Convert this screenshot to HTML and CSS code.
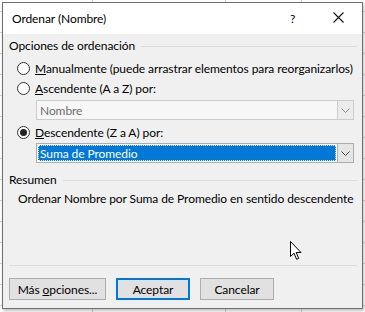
FILE: index.html
```html
<!DOCTYPE html>
<html lang="es">
<head>
  <meta charset="UTF-8">
  <title>Ordenar (Nombre)</title>
  <link rel="stylesheet" href="styles.css">
</head>
<body>
  <div class="sheet">
    <div class="dialog">
      <div class="titlebar">
        <span class="title">Ordenar (Nombre)</span>
        <span class="help">?</span>
        <svg class="close" width="11" height="11" viewBox="0 0 11 11"><path d="M0.5 0.5 L10.5 10.5 M10.5 0.5 L0.5 10.5" stroke="#111" stroke-width="1.1" fill="none"/></svg>
      </div>

      <div class="body">
        <div class="group-label"><span>Opciones de ordenación</span><i></i></div>

        <label class="radio-row first">
          <span class="radio"></span>
          <span><u>M</u>anualmente (puede arrastrar elementos para reorganizarlos)</span>
        </label>
        <label class="radio-row">
          <span class="radio"></span>
          <span><u>A</u>scendente (A a Z) por:</span>
        </label>
        <div class="combo disabled">
          <span class="combo-text">Nombre</span>
          <span class="combo-btn"><svg width="9" height="5" viewBox="0 0 9 5"><path d="M0.5 0.5 L4.5 4.5 L8.5 0.5" stroke="#8a8a8a" fill="none"/></svg></span>
        </div>

        <label class="radio-row third">
          <span class="radio checked"></span>
          <span><u>D</u>escendente (Z a A) por:</span>
        </label>
        <div class="combo active">
          <span class="combo-text"><span class="sel">Suma de Promedio</span></span>
          <span class="combo-btn"><svg width="9" height="5" viewBox="0 0 9 5"><path d="M0.5 0.5 L4.5 4.5 L8.5 0.5" stroke="#444" fill="none"/></svg></span>
        </div>

        <div class="group-label summary-label"><span>Resumen</span><i></i></div>
        <p class="summary">Ordenar Nombre por Suma de Promedio en sentido descendente</p>

        <div class="separator"></div>

        <div class="buttons">
          <button class="btn wide">Más <u>o</u>pciones...</button>
          <button class="btn default">Aceptar</button>
          <button class="btn">Cancelar</button>
        </div>
      </div>

      <svg class="cursor" width="13" height="20" viewBox="0 0 13 20"><path d="M0.5 0.5 L0.5 15.5 L4 12.2 L6.6 18.3 L8.7 17.4 L6.2 11.5 L11 11.5 Z" fill="#fff" stroke="#000" stroke-width="1" stroke-linejoin="miter"/></svg>
    </div>
  </div>
</body>
</html>
```

FILE: styles.css
```css
* {
  box-sizing: border-box;
  margin: 0;
  padding: 0;
}

body {
  width: 365px;
  height: 312px;
  overflow: hidden;
  font-family: Lato, sans-serif;
  font-size: 12px;
  letter-spacing: -0.08px;
  color: #000;
  background: #fff;
}

/* spreadsheet grid behind the dialog */
.sheet {
  height: 312px;
  padding: 2px 0 0 2px;
  background-color: #fff;
  background-image:
    linear-gradient(90deg, transparent 92px, #d4d4d4 92px, #d4d4d4 93px, transparent 93px),
    linear-gradient(90deg, transparent 225px, #d4d4d4 225px, #d4d4d4 226px, transparent 226px),
    linear-gradient(90deg, transparent 301px, #d4d4d4 301px, #d4d4d4 302px, transparent 302px),
    repeating-linear-gradient(180deg, transparent 0, transparent 11px, #d4d4d4 11px, #d4d4d4 12px, transparent 12px, transparent 21px);
}

.dialog {
  position: relative;
  width: 361px;
  height: 307px;
  border: 1px solid #6f6f6f;
  background: #f0f0f0;
  box-shadow: 1px 2px 3px rgba(0, 0, 0, 0.25);
}

.titlebar {
  height: 31px;
  background: #fff;
  display: flex;
  align-items: center;
  padding: 0 0 0 9px;
}

.title {
  flex: 1;
  margin-top: -1px;
}

.help {
  width: 14px;
  margin-right: 29px;
  margin-top: -1px;
}

.close {
  margin-right: 18px;
  margin-top: -2px;
}

.body {
  padding: 4px 5px 0 6px;
}

.group-label {
  display: flex;
  align-items: center;
  height: 16px;
  line-height: 16px;
}

.group-label i {
  flex: 1;
  height: 1px;
  background: #dcdcdc;
  margin-left: 6px;
}

.radio-row {
  display: flex;
  align-items: center;
  height: 20px;
  padding-left: 8px;
  white-space: nowrap;
}

.radio-row.first {
  margin-top: 4px;
}

.radio-row.third {
  margin-top: 2px;
}

.radio {
  flex-shrink: 0;
  width: 13px;
  height: 13px;
  border: 1px solid #333;
  border-radius: 50%;
  background: #fff;
  margin-right: 5px;
  position: relative;
}

.radio.checked::after {
  content: '';
  position: absolute;
  left: 2px;
  top: 2px;
  width: 7px;
  height: 7px;
  border-radius: 50%;
  background: #222;
}

u {
  text-decoration: underline;
  text-underline-offset: 1px;
}

.combo {
  display: flex;
  height: 20px;
  margin: 2px 0 0 27px;
  width: 318px;
  border: 1px solid #adadad;
  background: #fff;
}

.combo.active {
  margin-top: 1px;
}

.combo.disabled {
  border-color: #cccccc;
  background: #f7f7f7;
  color: #6d6d6d;
}

.combo-text {
  flex: 1;
  display: flex;
  align-items: center;
  padding-left: 3px;
}

.combo.active .combo-text {
  padding: 1px;
}

.sel {
  display: flex;
  align-items: center;
  width: 100%;
  height: 100%;
  background: #0078d7;
  color: #fff;
  padding-left: 2px;
  outline: 1px dotted #fff;
  outline-offset: -1px;
}

.combo-btn {
  width: 16px;
  display: flex;
  align-items: center;
  justify-content: center;
  background: #e5e5e5;
  border-left: 1px solid #adadad;
}

.combo.disabled .combo-btn {
  background: #ececec;
  border-left-color: #cccccc;
}

.summary-label {
  margin-top: 9px;
}

.summary {
  margin: 3px 0 0 9px;
  height: 16px;
  line-height: 16px;
  white-space: nowrap;
}

.separator {
  height: 1px;
  background: #dcdcdc;
  margin-top: 58px;
}

.buttons {
  display: flex;
  gap: 10px;
  margin-top: 12px;
}

.btn {
  height: 22px;
  width: 74px;
  font-family: Lato, sans-serif;
  font-size: 12px;
  letter-spacing: -0.08px;
  color: #000;
  background: #e1e1e1;
  border: 1px solid #adadad;
}

.btn.wide {
  width: 97px;
}

.btn.default {
  border: 2px solid #0078d7;
}

.cursor {
  position: absolute;
  left: 287px;
  top: 238px;
}
```
